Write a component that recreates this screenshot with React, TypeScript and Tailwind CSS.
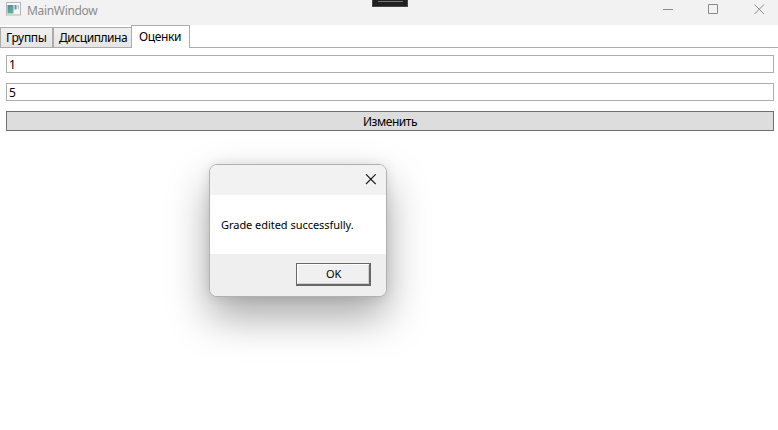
function AppIcon() {
  return (
    <svg className="ml-[6px] mt-[2px] shrink-0" width="15" height="14" viewBox="0 0 15 14">
      <defs>
        <linearGradient id="pane" x1="0" y1="0" x2="0.6" y2="1">
          <stop offset="0" stopColor="#4c86b4" />
          <stop offset="1" stopColor="#67b58c" />
        </linearGradient>
      </defs>
      <rect x="0.5" y="0.5" width="14" height="12.500" fill="#f6f6f6" stroke="#b4b7ba" />
      <rect x="1.500" y="3" width="6" height="8.500" fill="url(#pane)" />
      <rect x="8.500" y="3" width="2" height="4.500" fill="#6e93a8" />
      <rect x="11.500" y="3" width="1.500" height="4" fill="#b9c8cf" />
    </svg>
  );
}

function TitleBar() {
  return (
    <header className="relative flex h-[25px] shrink-0 bg-[#f2f2f2]">
      <AppIcon />
      <span className="ml-[6px] mt-[2px] grow text-[12px] leading-[18px] tracking-[-0.32px] text-[#8c8c8c]">MainWindow</span>
      <div className="absolute left-[372px] top-0 h-[7px] w-[36px] border border-t-0 border-[#474747] bg-[#202020]">
        <div className="mx-auto mt-px h-px w-[25px] bg-[#777]" />
      </div>
      <svg className="shrink-0" width="115" height="25" viewBox="0 0 115 25" fill="none" stroke="#8a8a8a">
        <path d="M0 9.500h10M45.500 4.500h9v9h-9zM91.500 4.500l9.500 9.500M101 4.500l-9.500 9.500" />
      </svg>
    </header>
  );
}

function MessageBox() {
  return (
    <div className="absolute left-[209px] top-[164px] flex h-[133px] w-[178px] flex-col overflow-hidden rounded-[8px] border border-[#b0b0b0] bg-white shadow-[0_0_12px_rgba(0,0,0,0.10),0_20px_40px_rgba(0,0,0,0.34)]">
      <div className="flex h-[30px] shrink-0 justify-end bg-[#f2f2f2] pr-[10px] pt-[9px]">
        <svg width="11" height="11" viewBox="0 0 11 11" stroke="#1b1b1b" strokeWidth="1.150">
          <path d="M1 0.300l9.700 9.700M10.700 0.300l-9.700 9.700" />
        </svg>
      </div>
      <div className="h-[59px] shrink-0 pl-[11px] pt-[21px] text-[11px] leading-[18px] tracking-[-0.04px]">
        <span className="whitespace-nowrap">Grade edited successfully.</span>
      </div>
      <div className="flex grow justify-end bg-[#efefef] pr-[15px] pt-[9px]">
        <button className="flex h-[23px] w-[75px] items-center justify-center border border-b-2 border-r-2 border-[#686868] bg-[#f0f0f0] pl-[1px] text-[11px] leading-[18px] tracking-[-0.3px] shadow-[inset_1px_1px_0_#fff,inset_-1px_-1px_0_#d0d0d0]">
          OK
        </button>
      </div>
    </div>
  );
}

export default function App() {
  return (
    <div className="relative flex h-[430px] w-[778px] flex-col overflow-hidden bg-white font-['Noto_Sans','Open_Sans',sans-serif] text-[12px] text-black">
      <TitleBar />
      <nav className="flex h-[23px] shrink-0 items-end">
        <div className="flex h-[21px] w-[53px] items-center border border-[#acacac] bg-linear-to-b from-[#f0f0f0] to-[#e5e5e5] pl-[5px] tracking-[-0.3px]">
          <span>Группы</span>
        </div>
        <div className="flex h-[21px] w-[78px] items-center border border-r-0 border-[#acacac] bg-linear-to-b from-[#f0f0f0] to-[#e5e5e5] pl-[5px] tracking-[-0.45px]">
          <span>Дисциплина</span>
        </div>
        <div className="flex h-[23px] w-[59px] items-center border border-b-0 border-[#acacac] bg-white pl-[7px] tracking-[-0.35px]">
          <span>Оценки</span>
        </div>
        <div className="h-px grow bg-[#acacac]" />
      </nav>
      <main className="flex flex-col gap-[10px] pl-[6px] pr-[4px] pt-[7px]">
        <div className="flex h-[18px] items-center border border-[#abadb3] pl-[2px] pt-[1px]">1</div>
        <div className="flex h-[18px] items-center border border-[#abadb3] pl-[2px] pt-[1px]">5</div>
        <button className="flex h-[20px] items-center justify-center border border-[#707070] bg-[#ddd] pt-[2px] tracking-[-0.45px]">
          <span>Изменить</span>
        </button>
      </main>
      <MessageBox />
    </div>
  );
}
